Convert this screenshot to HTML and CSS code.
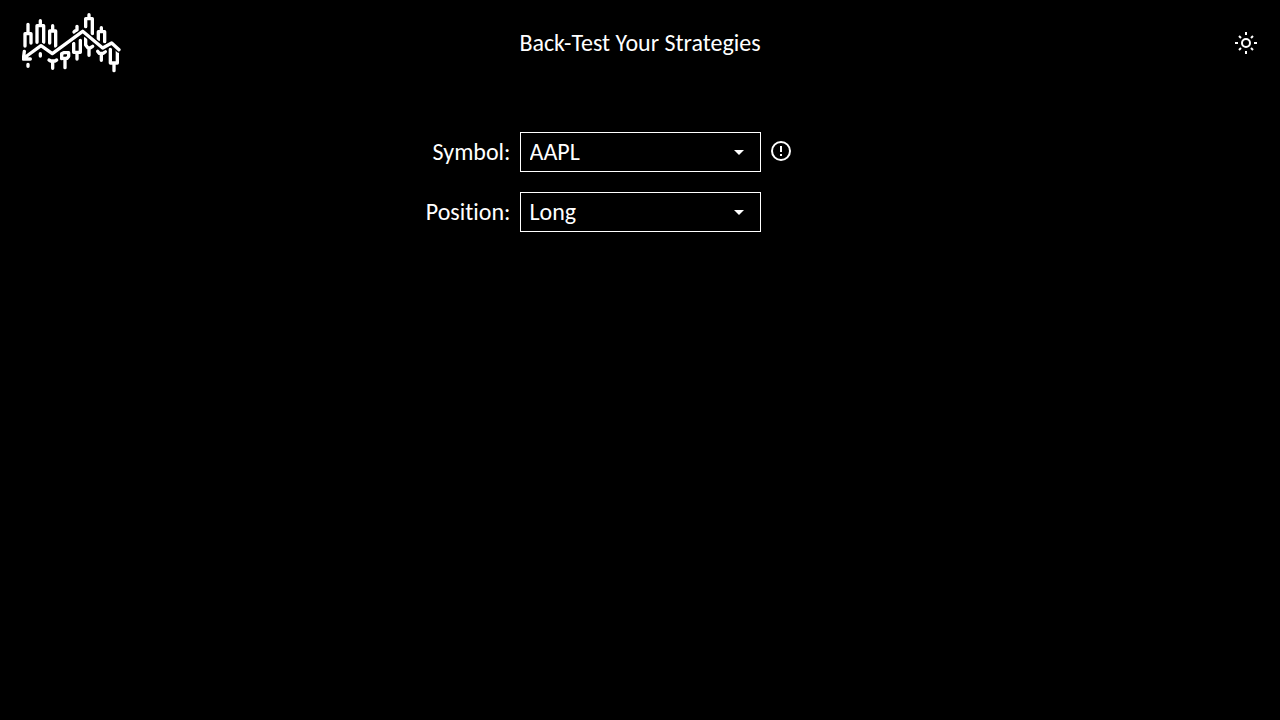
FILE: index.html
```html
<!DOCTYPE html>
<html lang="en">
<head>
<meta charset="utf-8">
<title>Back-Test Your Strategies</title>
<link rel="stylesheet" href="styles.css">
</head>
<body>
<header class="header">
  <svg class="logo" viewBox="18 4 300 204" role="img" aria-label="Logo">
    <path d="M36 50V75M27 115V78H45V106M73 39V52M63 104V54H83V104M110 54V68M101 106V70H119V116"/>
    <path d="M36 170V176M73 138V145M99 157L104 160H117L122 157M110 160V182M137 153V138L143 135H158V146L153 152H141M147 152V180"/>
    <path d="M174 73L178 69H183V56M219 21V32M209 57V33H229V78M256 60V70M247 97V72H266V102"/>
    <path d="M173 107V134H193V98M183 134V154M209 91V112L216 121H222L230 116M219 121V143M245 131L250 137H262L268 132M256 137V158M283 125V166H304V127M294 166V189"/>
    <path class="halo" d="M24 151L75 114L109 138L200 71L260 121L287 106L309 126"/>
    <path d="M24 151L75 114L109 138L200 71L260 121L287 106L309 126M25 131L22 154H43"/>
  </svg>
  <h1 class="title">Back-Test Your Strategies</h1>
  <button class="theme" type="button" aria-label="Light theme">
    <svg class="icon" viewBox="0 0 24 24">
      <circle cx="12" cy="12" r="4"/>
      <path d="M12 1V4M12 20V23M1 12H4M20 12H23M5 5L7 7M17 17L19 19M5 19L7 17M17 7L19 5"/>
    </svg>
  </button>
</header>
<main>
  <form class="form">
    <label class="label" for="symbol">Symbol:</label>
    <span class="field"><select class="select" id="symbol"><option>AAPL</option></select></span>
    <button class="info" type="button" aria-label="Symbol information">
      <svg class="icon" viewBox="0 0 24 24">
        <circle cx="12" cy="12" r="9"/>
        <path d="M12 7V13M12 15V17"/>
      </svg>
    </button>
    <label class="label" for="position">Position:</label>
    <span class="field"><select class="select" id="position"><option>Long</option></select></span>
  </form>
</main>
</body>
</html>
```
FILE: styles.css
```css
* { box-sizing: border-box; }
body {
  margin: 0;
  background: #000;
  color: #fff;
  font: 24px/28px Calibri, Carlito, Lato, sans-serif;
  font-variant-ligatures: none;
}
.header {
  display: grid;
  grid-template-columns: 1fr auto 1fr;
  align-items: center;
  padding: 9px 22px 7px;
}
.logo {
  width: 100px;
  height: 68px;
  fill: none;
  stroke: #fff;
  stroke-width: 10;
  stroke-linejoin: round;
  stroke-linecap: round;
}
.halo { stroke: #000; stroke-width: 18; }
.title { margin: 0; font-size: 24px; font-weight: 400; }
.theme, .info {
  display: flex;
  padding: 0;
  border: 0;
  background: none;
  color: inherit;
}
.theme { justify-self: end; }
.icon {
  width: 24px;
  height: 24px;
  fill: none;
  stroke: currentColor;
  stroke-width: 2;
}
.form {
  display: grid;
  grid-template-columns: 1fr 241px 1fr;
  gap: 20px 8px;
  align-items: center;
  padding-top: 48px;
}
.label { justify-self: end; padding-right: 1px; }
.info { padding-bottom: 2px; }
.field { display: grid; align-items: center; }
.field::after {
  content: "";
  grid-area: 1 / 1;
  justify-self: end;
  margin-right: 17px;
  border: 5px solid transparent;
  border-top-color: #fff;
  border-bottom: 0;
  pointer-events: none;
}
.select {
  grid-area: 1 / 1;
  appearance: none;
  width: 100%;
  height: 40px;
  padding: 0 9px;
  border: 1px solid #fff;
  border-radius: 0;
  background: #000;
  color: inherit;
  font: inherit;
}
```
